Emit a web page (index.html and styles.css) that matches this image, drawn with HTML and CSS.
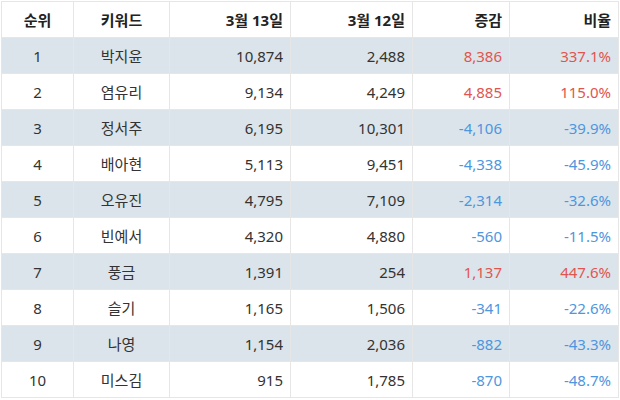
FILE: index.html
```html
<!DOCTYPE html>
<html lang="ko">
<head>
<meta charset="utf-8">
<link rel="stylesheet" href="styles.css">
</head>
<body>
<table class="rank">
  <colgroup>
    <col class="c1"><col class="c2"><col class="c3"><col class="c4"><col class="c5"><col class="c6">
  </colgroup>
  <thead>
    <tr><th class="ctr">순위</th><th class="ctr">키워드</th><th>3월 13일</th><th>3월 12일</th><th>증감</th><th>비율</th></tr>
  </thead>
  <tbody>
    <tr><td class="ctr">1</td><td class="ctr">박지윤</td><td>10,874</td><td>2,488</td><td class="up">8,386</td><td class="up">337.1%</td></tr>
    <tr><td class="ctr">2</td><td class="ctr">염유리</td><td>9,134</td><td>4,249</td><td class="up">4,885</td><td class="up">115.0%</td></tr>
    <tr><td class="ctr">3</td><td class="ctr">정서주</td><td>6,195</td><td>10,301</td><td class="down">-4,106</td><td class="down">-39.9%</td></tr>
    <tr><td class="ctr">4</td><td class="ctr">배아현</td><td>5,113</td><td>9,451</td><td class="down">-4,338</td><td class="down">-45.9%</td></tr>
    <tr><td class="ctr">5</td><td class="ctr">오유진</td><td>4,795</td><td>7,109</td><td class="down">-2,314</td><td class="down">-32.6%</td></tr>
    <tr><td class="ctr">6</td><td class="ctr">빈예서</td><td>4,320</td><td>4,880</td><td class="down">-560</td><td class="down">-11.5%</td></tr>
    <tr><td class="ctr">7</td><td class="ctr">풍금</td><td>1,391</td><td>254</td><td class="up">1,137</td><td class="up">447.6%</td></tr>
    <tr><td class="ctr">8</td><td class="ctr">슬기</td><td>1,165</td><td>1,506</td><td class="down">-341</td><td class="down">-22.6%</td></tr>
    <tr><td class="ctr">9</td><td class="ctr">나영</td><td>1,154</td><td>2,036</td><td class="down">-882</td><td class="down">-43.3%</td></tr>
    <tr><td class="ctr">10</td><td class="ctr">미스김</td><td>915</td><td>1,785</td><td class="down">-870</td><td class="down">-48.7%</td></tr>
  </tbody>
</table>
</body>
</html>
```
FILE: styles.css
```css
html, body {
  margin: 0;
  padding: 0;
  background: #ffffff;
}
body {
  padding: 1px 0 0 1px;
  font-family: "Noto Sans", "Noto Sans CJK KR", sans-serif;
  font-size: 15px;
  color: #333333;
}
.rank {
  border-collapse: collapse;
  table-layout: fixed;
  width: 617px;
}
.c1 { width: 72px; }
.c2 { width: 96px; }
.c3 { width: 121px; }
.c4 { width: 122px; }
.c5 { width: 97px; }
.c6 { width: 109px; }
.rank th, .rank td {
  height: 36px;
  padding: 0 7px 0 6px;
  border: 1px solid #e6e6e6;
  text-align: right;
  vertical-align: middle;
  line-height: 20px;
  box-sizing: border-box;
}
.rank th {
  font-weight: bold;
  color: #222222;
}
.rank .ctr {
  text-align: center;
  padding: 0;
}
.rank tbody tr:nth-child(odd) td {
  background: #dbe4ea;
}
.rank .up { color: #e2554f; }
.rank .down { color: #4d96e0; }
```
